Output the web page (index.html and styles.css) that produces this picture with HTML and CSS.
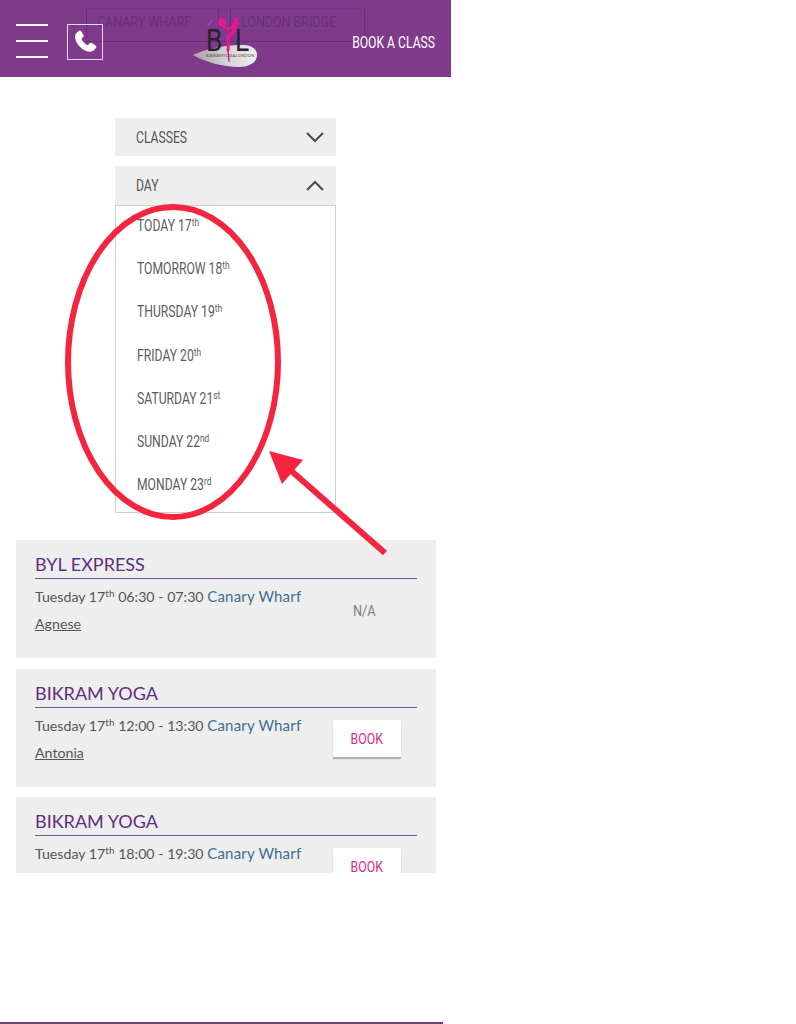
FILE: index.html
```html
<!DOCTYPE html>
<html lang="en">
<head>
  <meta charset="UTF-8">
  <meta name="viewport" content="width=device-width, initial-scale=1.0">
  <title>Book a class</title>
  <link rel="stylesheet" href="styles.css">
</head>
<body>
  <div class="page">
    <header class="topbar">
      <!-- tabs showing through the translucent bar -->
      <div class="ghost-tabs">
        <span class="ghost-tab ghost-first"><span class="squeeze">CANARY WHARF <span class="ghost-tick">✓</span></span></span>
        <span class="ghost-tab ghost-second"><span class="squeeze">LONDON BRIDGE</span></span>
      </div>

      <div class="burger"><span></span><span></span><span></span></div>

      <div class="phone">
        <svg width="26" height="26" viewBox="0 0 24 24">
          <path fill="#fff" d="M6.6 1.6c.7-.4 1.400-.2 1.800.4l2.200 3.600c.4.600.2 1.300-.3 1.800L9.200 8.500c-.4.400-.5.900-.2 1.500 1.100 2 2.500 3.500 4.600 4.700.5.300 1.100.2 1.500-.2l1.300-1.300c.5-.5 1.200-.6 1.800-.2l3.700 2.300c.6.400.8 1.200.4 1.800-1.200 2.300-3.500 4.100-6 3.800C9.700 20.200 3.500 14 2.800 7.500 2.600 5 4.300 2.800 6.600 1.600z"/>
        </svg>
      </div>

      <div class="logo">
        <svg class="logo-drop" width="66" height="23" viewBox="0 0 66 23">
          <defs>
            <linearGradient id="dropFill" x1="0" y1="0" x2="1" y2="0">
              <stop offset="0" stop-color="#a9a5ab"/>
              <stop offset="0.6" stop-color="#d8d8d8"/>
              <stop offset="1" stop-color="#eeeeee"/>
            </linearGradient>
          </defs>
          <path fill="url(#dropFill)" d="M0 10C10 5 26 1 46 0c11-1 18 3 18 10 0 7-7 12-18 12C30 22 12 17 0 10z"/>
        </svg>
        <span class="logo-letter logo-b">B</span>
        <span class="logo-letter logo-l">L</span>
        <svg class="logo-figure" width="30" height="50" viewBox="0 0 30 50">
          <g fill="none" stroke="#e6188c" stroke-linecap="round" stroke-linejoin="round">
            <path stroke-width="1.500" d="M15 45L14 34"/>
            <path stroke-width="3" d="M14 34L15 19"/>
            <path stroke-width="4" d="M14 21C19 17 23 11 22 3"/>
            <path stroke-width="3" d="M8 8C11 13 15 14 18 11 21 8 22 6 22 3"/>
          </g>
          <circle cx="8" cy="6" r="4" fill="#e6188c"/>
        </svg>
        <span class="logo-small">BIKRAMYOGALONDON</span>
      </div>

      <a class="book-link"><span class="squeeze">BOOK A CLASS</span></a>
    </header>

    <section class="filters">
      <div class="select-head">
        <span class="squeeze">CLASSES</span>
        <svg width="18" height="12" viewBox="0 0 18 12"><path class="chevron" d="M1 2l8 8 8-8"/></svg>
      </div>
      <div class="select-head">
        <span class="squeeze">DAY</span>
        <svg width="18" height="12" viewBox="0 0 18 12"><path class="chevron" d="M1 10l8-8 8 8"/></svg>
      </div>
      <ul class="day-list">
        <li><span class="squeeze">TODAY 17<sup>th</sup></span></li>
        <li><span class="squeeze">TOMORROW 18<sup>th</sup></span></li>
        <li><span class="squeeze">THURSDAY 19<sup>th</sup></span></li>
        <li><span class="squeeze">FRIDAY 20<sup>th</sup></span></li>
        <li><span class="squeeze">SATURDAY 21<sup>st</sup></span></li>
        <li><span class="squeeze">SUNDAY 22<sup>nd</sup></span></li>
        <li><span class="squeeze">MONDAY 23<sup>rd</sup></span></li>
      </ul>
    </section>

    <section class="classes">
      <article class="card">
        <h2>BYL EXPRESS</h2>
        <div class="card-body">
          <div class="card-info">
            <p>Tuesday 17<sup>th</sup> 06:30 - 07:30 <span class="place">Canary Wharf</span></p>
            <p><a class="teacher">Agnese</a></p>
          </div>
          <div class="card-action"><span class="not-available">N/A</span></div>
        </div>
      </article>

      <article class="card">
        <h2>BIKRAM YOGA</h2>
        <div class="card-body">
          <div class="card-info">
            <p>Tuesday 17<sup>th</sup> 12:00 - 13:30 <span class="place">Canary Wharf</span></p>
            <p><a class="teacher">Antonia</a></p>
          </div>
          <div class="card-action"><button type="button" class="book-btn"><span class="btn-label">BOOK</span></button></div>
        </div>
      </article>

      <article class="card">
        <h2>BIKRAM YOGA</h2>
        <div class="card-body">
          <div class="card-info">
            <p>Tuesday 17<sup>th</sup> 18:00 - 19:30 <span class="place">Canary Wharf</span></p>
          </div>
          <div class="card-action"><button type="button" class="book-btn"><span class="btn-label">BOOK</span></button></div>
        </div>
      </article>
    </section>

    <!-- red annotation drawn over the screenshot -->
    <svg class="markup" width="451" height="600" viewBox="0 0 451 600">
      <ellipse cx="173" cy="362" rx="105" ry="155" fill="none" stroke="#f5253f" stroke-width="6"/>
      <path d="M385 553L288 468" stroke="#f5253f" stroke-width="6" fill="none"/>
      <path d="M269 451L303 460 282 484z" fill="#f5253f"/>
    </svg>

    <div class="bottom-line"></div>
  </div>
</body>
</html>
```

FILE: styles.css
```css
/* General Styles */
body {
  margin: 0;
  padding: 0;
  background-color: #fff;
  font-family: "Lato", "Open Sans", sans-serif;
}

.page {
  position: relative;
  width: 796px;
  height: 1024px;
  overflow: hidden;
}

/* no condensed family is installed, so narrow Roboto by hand */
.squeeze {
  display: inline-block;
  transform: scaleX(0.76);
  transform-origin: left center;
  white-space: nowrap;
}

/* Top bar */
.topbar {
  position: relative;
  display: flex;
  align-items: center;
  width: 451px;
  height: 77px;
  padding-top: 6px;
  box-sizing: border-box;
  background-color: #7f3a8c;
  overflow: hidden;
}

.ghost-tabs {
  position: absolute;
  top: 8px;
  left: 86px;
  width: 279px;
  height: 34px;
  display: flex;
  border: 1px solid #6a2c79;
  border-top-color: #77358a;
  box-sizing: border-box;
  font-family: "Roboto", sans-serif;
  font-size: 15px;
  line-height: 16px;
  color: #68307a;
}

.ghost-tab {
  padding: 5px 0 0 10px;
  box-sizing: border-box;
}

.ghost-tab .squeeze {
  transform: scaleX(0.83);
}

.ghost-first {
  width: 132px;
  border-right: 1px solid #6a2c79;
}

.ghost-second {
  margin-left: 11px;
  border-left: 1px solid #6a2c79;
}

.ghost-tick {
  margin-left: 14px;
  font-size: 12px;
  color: #8f5a9c;
}

.burger {
  margin-left: 16px;
  margin-top: -1px;
  width: 32px;
  height: 34px;
  display: flex;
  flex-direction: column;
  justify-content: space-between;
}

.burger span {
  display: block;
  height: 2px;
  background-color: #fff;
}

.phone {
  position: relative;
  margin-left: 19px;
  width: 36px;
  height: 36px;
  box-sizing: border-box;
  border: 1px solid #e8d8ec;
  display: flex;
  align-items: center;
  justify-content: center;
}

.logo {
  position: absolute;
  left: 192px;
  top: 16px;
  width: 68px;
  height: 54px;
}

.logo-drop {
  position: absolute;
  left: 1px;
  top: 29px;
}

.logo-letter {
  position: absolute;
  top: 14px;
  font-family: "Roboto", sans-serif;
  font-size: 31px;
  line-height: 22px;
  color: #2a2230;
  transform: scaleX(0.85);
  transform-origin: left center;
}

.logo-b {
  left: 14px;
}

.logo-l {
  left: 43px;
}

.logo-figure {
  position: absolute;
  left: 22px;
  top: 0;
}

.logo-small {
  position: absolute;
  left: 14px;
  top: 37px;
  font-size: 4px;
  line-height: 5px;
  letter-spacing: 0.3px;
  color: #444;
}

.book-link {
  margin-left: auto;
  margin-right: 16px;
  margin-top: 2px;
  font-family: "Roboto", sans-serif;
  font-size: 16px;
  color: #fff;
}

.book-link .squeeze {
  transform-origin: right center;
}

/* Filters */
.filters {
  width: 221px;
  margin: 41px 0 0 115px;
  font-family: "Roboto", sans-serif;
  color: #555;
}

.select-head {
  display: flex;
  align-items: center;
  justify-content: space-between;
  height: 38px;
  margin-bottom: 10px;
  padding: 0 12px 0 21px;
  background-color: #eeeeee;
  font-size: 16px;
}

.select-head:nth-child(2) {
  height: 39px;
  margin-bottom: 0;
}

.chevron {
  fill: none;
  stroke: #4a4a4a;
  stroke-width: 2;
}

.day-list {
  list-style: none;
  margin: 0;
  padding: 0 0 0 21px;
  height: 308px;
  box-sizing: border-box;
  border: 1px solid #cfcfcf;
  font-size: 16px;
  color: #5c5c5c;
}

.day-list li {
  height: 43.2px;
  line-height: 40px;
}

.day-list sup {
  font-size: 11px;
  line-height: 0;
  vertical-align: 5px;
}

/* Class cards */
.classes {
  width: 420px;
  height: 333px;
  margin: 27px 0 0 16px;
  overflow: hidden;
  display: flex;
  flex-direction: column;
  gap: 11px;
}

.card {
  flex: none;
  height: 118px;
  box-sizing: border-box;
  padding: 13px 19px 0;
  background-color: #eeeeee;
}

.card:nth-child(2) {
  margin-bottom: -1px;
}

.card h2 {
  margin: 0;
  height: 25px;
  line-height: 23px;
  border-bottom: 1px solid #7f4f92;
  font-size: 18px;
  font-weight: 400;
  color: #5f2f7f;
}

.card-body {
  display: flex;
}

.card-info {
  width: 298px;
}

.card-info p {
  margin: 0;
  height: 26.5px;
  line-height: 35px;
  font-size: 14.2px;
  color: #555;
  white-space: nowrap;
}

.card-info sup {
  font-size: 10px;
  line-height: 0;
  vertical-align: 5px;
}

.place {
  font-size: 15px;
  letter-spacing: 0.2px;
  color: #3f6f8f;
}

.teacher {
  text-decoration: underline;
}

.card-action {
  display: flex;
  justify-content: center;
  width: 68px;
  margin-top: 12px;
}

.not-available {
  margin: 11px 5px 0 0;
  font-family: "Roboto", sans-serif;
  font-size: 15px;
  color: #808080;
  transform: scaleX(0.85);
}

.book-btn {
  width: 68px;
  height: 37px;
  padding: 0;
  border: none;
  background-color: #fff;
  box-shadow: 0 2px 1px #b0b0b0;
  font-family: "Roboto", sans-serif;
  font-size: 15px;
  color: #e0288c;
}

.btn-label {
  display: inline-block;
  transform: scaleX(0.82);
}

/* Annotation */
.markup {
  position: absolute;
  left: 0;
  top: 0;
  pointer-events: none;
}

.bottom-line {
  position: absolute;
  left: 0;
  bottom: 0;
  width: 443px;
  height: 2px;
  background-color: #6a3f7a;
}
```
